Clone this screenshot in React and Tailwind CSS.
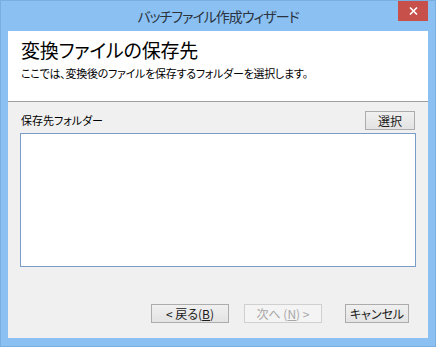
import React from "react";

const jp = { fontFamily: '"Noto Sans CJK JP", "Noto Sans", sans-serif', fontFeatureSettings: '"palt"' };

const Btn = ({ children, disabled, className = "" }) => (
  <button
    disabled={disabled}
    className={`h-[19px] flex items-center justify-center text-[12px] leading-none border ${
      disabled
        ? "border-[#d0d0d0] bg-[#f4f4f4] text-[#a8a8a8]"
        : "border-[#acacac] bg-gradient-to-b from-[#f0f0f0] to-[#e3e3e3] text-[#1a1a1a]"
    } ${className}`}
  >
    {children}
  </button>
);

export default function App() {
  return (
    <div style={jp} className="w-[436px] h-[347px] bg-[#8bc0f2] border border-[#7aaee0] flex flex-col">
      {/* Title bar */}
      <div className="relative h-[30px] flex items-center justify-center">
        <span className="text-[14px] text-[#2a3440] tracking-[-1px]">バッチファイル作成ウィザード</span>
        <div className="absolute right-[7px] top-0 w-[30px] h-[20px] bg-[#c7504b] flex items-center justify-center">
          <svg width="9" height="8" viewBox="0 0 9 8">
            <path d="M1 0.5 L8 7.5 M8 0.5 L1 7.5" stroke="white" strokeWidth="1.6" />
          </svg>
        </div>
      </div>

      {/* Client area */}
      <div className="flex-1 mx-[7px] mb-[8px] bg-[#f0f0f0] flex flex-col">
        <div className="h-[71px] bg-white border-b border-[#a0a0a0] px-[13px] pt-[6px]">
          <div className="text-[19px] leading-[26px] text-black tracking-[-0.2px]">変換ファイルの保存先</div>
          <div className="text-[11px] leading-[16px] text-black mt-[2px] tracking-[-0.25px]">
            ここでは、変換後のファイルを保存するフォルダーを選択します。
          </div>
        </div>

        <div className="flex-1 flex flex-col px-[12px] pt-[9px]">
          <div className="flex items-center justify-between pl-[1px] pr-[1px]">
            <span className="text-[11px] text-black">保存先フォルダー</span>
            <Btn className="w-[50px]">選択</Btn>
          </div>
          <div className="mt-[3px] h-[134px] bg-white border border-[#7a9cc8]" />

          <div className="mt-auto mb-[15px] flex justify-end items-center pr-[7px]">
            <Btn className="w-[78px]">&lt; 戻る(<span className="underline">B</span>)</Btn>
            <Btn disabled className="w-[78px] ml-[15px]">次へ (<span className="underline">N</span>) &gt;</Btn>
            <Btn className="w-[64px] ml-[23px]">キャンセル</Btn>
          </div>
        </div>
      </div>
    </div>
  );
}
